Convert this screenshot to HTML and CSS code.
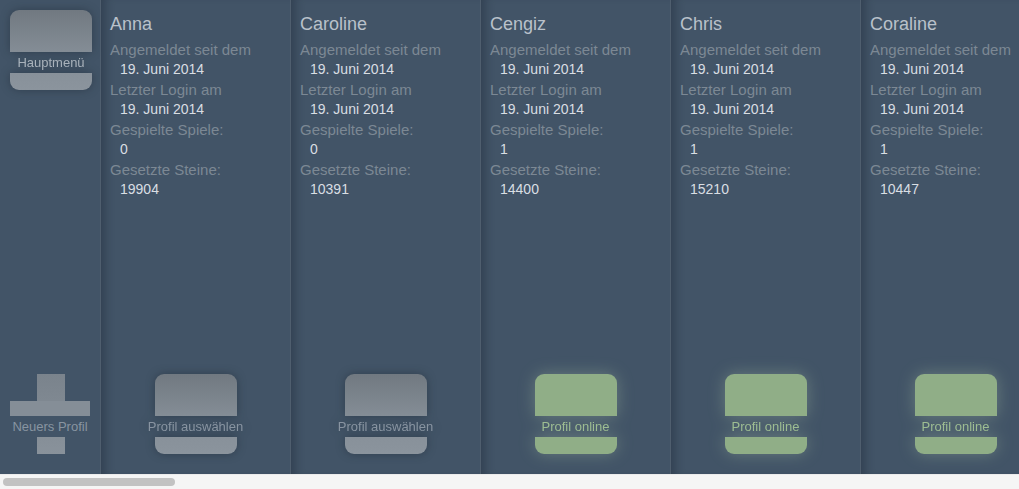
FILE: index.html
```html
<!DOCTYPE html>
<html lang="de">
<head>
<meta charset="utf-8">
<title>Profile</title>
<link rel="stylesheet" href="styles.css">
</head>
<body>
<div class="app">
  <div class="columns">
    <aside class="side">
      <div class="tile tile-gray tile-main"><span class="tile-top"></span><span class="tile-label light">Hauptmenü</span><span class="tile-bottom"></span></div>
      <div class="plus">
        <span class="plus-v"></span>
        <span class="plus-h"></span>
        <span class="plus-label">Neuers Profil</span>
      </div>
    </aside>

    <section class="profile">
      <div class="info">
        <h2 class="name">Anna</h2>
        <div class="label">Angemeldet seit dem</div>
        <div class="value">19. Juni 2014</div>
        <div class="label">Letzter Login am</div>
        <div class="value">19. Juni 2014</div>
        <div class="label">Gespielte Spiele:</div>
        <div class="value">0</div>
        <div class="label">Gesetzte Steine:</div>
        <div class="value">19904</div>
      </div>
      <div class="tile tile-gray"><span class="tile-top"></span><span class="tile-label">Profil auswählen</span><span class="tile-bottom"></span></div>
    </section>

    <section class="profile">
      <div class="info">
        <h2 class="name">Caroline</h2>
        <div class="label">Angemeldet seit dem</div>
        <div class="value">19. Juni 2014</div>
        <div class="label">Letzter Login am</div>
        <div class="value">19. Juni 2014</div>
        <div class="label">Gespielte Spiele:</div>
        <div class="value">0</div>
        <div class="label">Gesetzte Steine:</div>
        <div class="value">10391</div>
      </div>
      <div class="tile tile-gray"><span class="tile-top"></span><span class="tile-label">Profil auswählen</span><span class="tile-bottom"></span></div>
    </section>

    <section class="profile">
      <div class="info">
        <h2 class="name">Cengiz</h2>
        <div class="label">Angemeldet seit dem</div>
        <div class="value">19. Juni 2014</div>
        <div class="label">Letzter Login am</div>
        <div class="value">19. Juni 2014</div>
        <div class="label">Gespielte Spiele:</div>
        <div class="value">1</div>
        <div class="label">Gesetzte Steine:</div>
        <div class="value">14400</div>
      </div>
      <div class="tile tile-green"><span class="tile-top"></span><span class="tile-label green">Profil online</span><span class="tile-bottom"></span></div>
    </section>

    <section class="profile">
      <div class="info">
        <h2 class="name">Chris</h2>
        <div class="label">Angemeldet seit dem</div>
        <div class="value">19. Juni 2014</div>
        <div class="label">Letzter Login am</div>
        <div class="value">19. Juni 2014</div>
        <div class="label">Gespielte Spiele:</div>
        <div class="value">1</div>
        <div class="label">Gesetzte Steine:</div>
        <div class="value">15210</div>
      </div>
      <div class="tile tile-green"><span class="tile-top"></span><span class="tile-label green">Profil online</span><span class="tile-bottom"></span></div>
    </section>

    <section class="profile">
      <div class="info">
        <h2 class="name">Coraline</h2>
        <div class="label">Angemeldet seit dem</div>
        <div class="value">19. Juni 2014</div>
        <div class="label">Letzter Login am</div>
        <div class="value">19. Juni 2014</div>
        <div class="label">Gespielte Spiele:</div>
        <div class="value">1</div>
        <div class="label">Gesetzte Steine:</div>
        <div class="value">10447</div>
      </div>
      <div class="tile tile-green"><span class="tile-top"></span><span class="tile-label green">Profil online</span><span class="tile-bottom"></span></div>
    </section>
  </div>
  <div class="scrollbar"><div class="thumb"></div></div>
</div>
</body>
</html>
```

FILE: styles.css
```css
* { box-sizing: border-box; }

html, body {
  margin: 0;
  padding: 0;
  width: 1019px;
  height: 489px;
  overflow: hidden;
  background: #f4f4f4;
  font-family: "Liberation Sans", Arial, sans-serif;
}

.app {
  display: flex;
  flex-direction: column;
  height: 489px;
}

.columns {
  display: flex;
  height: 474px;
  overflow: hidden;
  background: #425467;
}

.side {
  flex: 0 0 100px;
  display: flex;
  flex-direction: column;
  justify-content: space-between;
  padding: 10px 0 20px 10px;
}

.profile {
  flex: 0 0 190px;
  display: flex;
  flex-direction: column;
  justify-content: space-between;
  padding: 13px 9px 20px 9px;
  border-left: 1px solid #4f5e6e;
  box-shadow: inset 10px 0 10px -6px rgba(20, 30, 42, 0.35);
}

.name {
  margin: 0 0 5px 0;
  font-size: 18px;
  line-height: 22px;
  font-weight: normal;
  color: #b9c1ca;
}

.label {
  font-size: 15px;
  line-height: 20px;
  color: #7c8894;
}

.value {
  font-size: 14px;
  line-height: 20px;
  margin: -1px 0 1px 0;
  padding-left: 10px;
  color: #d9dee3;
}

.tile {
  width: 82px;
  height: 80px;
  display: flex;
  flex-direction: column;
  align-self: center;
}

.tile-main {
  align-self: flex-start;
}

.tile-top {
  height: 42px;
  border-radius: 9px 9px 0 0;
}

.tile-bottom {
  height: 17px;
  border-radius: 0 0 9px 9px;
}

.tile-gray {
  filter: drop-shadow(0 0 5px rgba(15, 22, 32, 0.35));
}

.tile-gray .tile-top {
  background: linear-gradient(to bottom, #717981, #848d96);
}

.tile-gray .tile-bottom {
  background: linear-gradient(to bottom, #88919a, #8b949d);
}

.tile-green {
  filter: drop-shadow(0 0 8px rgba(175, 200, 165, 0.35));
}

.tile-green .tile-top,
.tile-green .tile-bottom {
  background: #90ae87;
}

.tile-label {
  display: flex;
  justify-content: center;
  height: 21px;
  line-height: 21px;
  font-size: 13px;
  white-space: nowrap;
  color: #8894a1;
}

.tile-label.light {
  color: #a9b2bb;
}

.tile-label.green {
  color: #9dbd92;
}

.plus {
  position: relative;
  width: 80px;
  height: 80px;
}

.plus-v {
  position: absolute;
  left: 27px;
  top: 0;
  width: 28px;
  height: 80px;
  background: linear-gradient(to bottom, #7a838c, #89929b);
}

.plus-h {
  position: absolute;
  left: 0;
  top: 27px;
  width: 80px;
  height: 26px;
  background: #858e97;
}

.plus-label {
  position: absolute;
  left: -10px;
  right: -10px;
  top: 42px;
  height: 21px;
  line-height: 21px;
  text-align: center;
  font-size: 13px;
  white-space: nowrap;
  background: #425467;
  color: #8894a1;
}

.scrollbar {
  height: 15px;
  background: #f5f5f5;
  border-top: 1px solid #ebebeb;
  padding: 3px 0 0 3px;
}

.thumb {
  width: 172px;
  height: 8px;
  border-radius: 4px;
  background: #c2c2c2;
}
```
